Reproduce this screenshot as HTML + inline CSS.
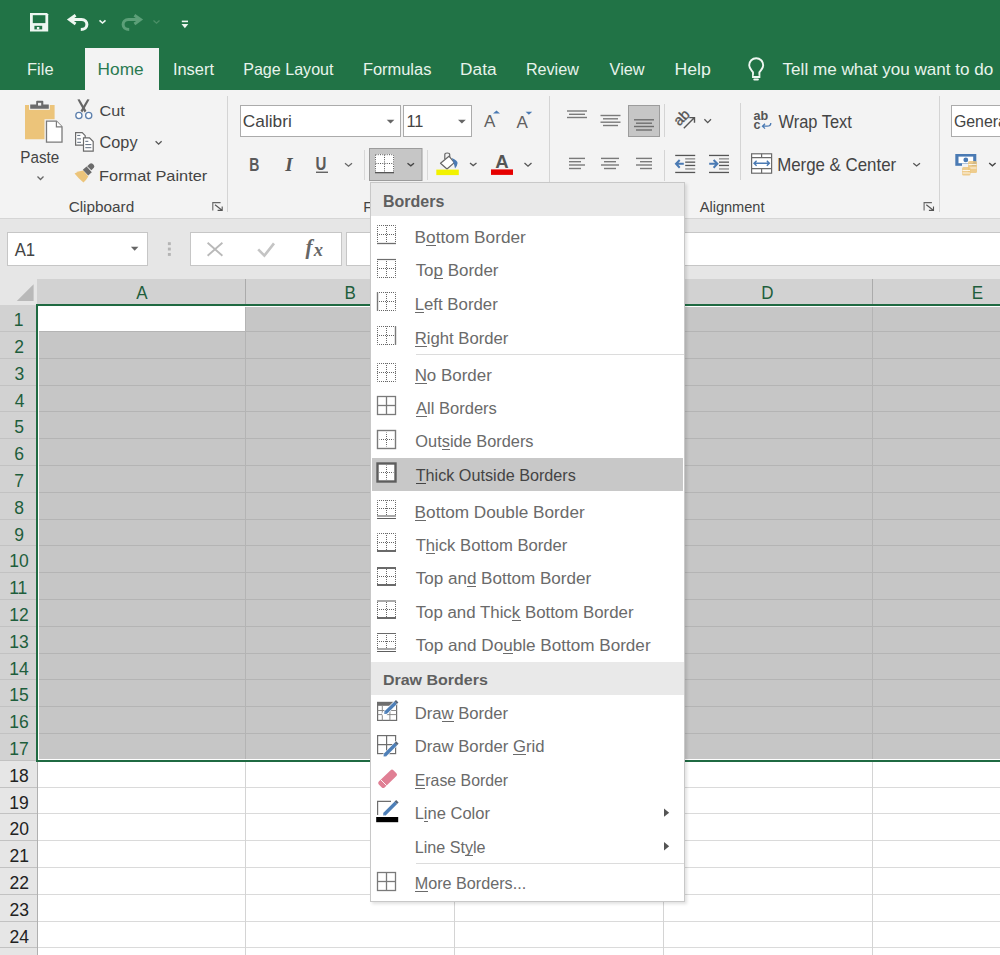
<!DOCTYPE html>
<html><head><meta charset="utf-8"><style>
*{margin:0;padding:0;box-sizing:border-box}
html,body{width:1000px;height:955px;overflow:hidden;background:#fff;font-family:"Liberation Sans",sans-serif}
.a{position:absolute}
svg.a{overflow:visible}
.t{position:absolute;white-space:nowrap}
</style></head><body>
<div class="a" style="left:0px;top:279px;width:37px;height:26px;background:#e6e6e6"></div>
<svg class="a" style="left:0;top:0" width="40" height="310"><path d="M16.8 301H33.6V284.2Z" fill="#b9b9b9"/></svg>
<div class="a" style="left:37px;top:279px;width:963px;height:26px;background:#d2d2d2"></div>
<div class="a" style="left:245px;top:279px;width:1px;height:26px;background:#ababab"></div>
<div class="a" style="left:454px;top:279px;width:1px;height:26px;background:#ababab"></div>
<div class="a" style="left:663px;top:279px;width:1px;height:26px;background:#ababab"></div>
<div class="a" style="left:872px;top:279px;width:1px;height:26px;background:#ababab"></div>
<div class="t" style="left:136.20px;top:284.00px;font-size:17.00px;line-height:19px;color:#1e5e3c;transform:scaleY(1.108);transform-origin:0 15px">A</div>
<div class="t" style="left:344.49px;top:284.00px;font-size:17.00px;line-height:19px;color:#1e5e3c;transform:scaleY(1.108);transform-origin:0 15px">B</div>
<div class="t" style="left:552.65px;top:284.00px;font-size:17.00px;line-height:19px;color:#1e5e3c;transform:scaleY(1.092);transform-origin:0 15px">C</div>
<div class="t" style="left:761.14px;top:284.00px;font-size:17.00px;line-height:19px;color:#1e5e3c;transform:scaleY(1.108);transform-origin:0 15px">D</div>
<div class="t" style="left:971.64px;top:284.00px;font-size:17.00px;line-height:19px;color:#1e5e3c;transform:scaleY(1.108);transform-origin:0 15px">E</div>
<div class="a" style="left:0px;top:305px;width:37px;height:26px;background:#d2d2d2"></div>
<div class="a" style="left:0px;top:331px;width:37px;height:1px;background:#c2c2c2"></div>
<div class="a" style="left:37px;top:305px;width:963px;height:26px;background:#c6c6c6"></div>
<div class="a" style="left:37px;top:331px;width:963px;height:1px;background:#b4b4b4"></div>
<div class="t" style="left:13.78px;top:310.00px;font-size:17.50px;line-height:20px;color:#1e5e3c">1</div>
<div class="a" style="left:0px;top:332px;width:37px;height:26px;background:#d2d2d2"></div>
<div class="a" style="left:0px;top:358px;width:37px;height:1px;background:#c2c2c2"></div>
<div class="a" style="left:37px;top:332px;width:963px;height:26px;background:#c6c6c6"></div>
<div class="a" style="left:37px;top:358px;width:963px;height:1px;background:#b4b4b4"></div>
<div class="t" style="left:14.13px;top:337.00px;font-size:17.50px;line-height:20px;color:#1e5e3c">2</div>
<div class="a" style="left:0px;top:359px;width:37px;height:26px;background:#d2d2d2"></div>
<div class="a" style="left:0px;top:385px;width:37px;height:1px;background:#c2c2c2"></div>
<div class="a" style="left:37px;top:359px;width:963px;height:26px;background:#c6c6c6"></div>
<div class="a" style="left:37px;top:385px;width:963px;height:1px;background:#b4b4b4"></div>
<div class="t" style="left:14.48px;top:364.00px;font-size:17.50px;line-height:20px;color:#1e5e3c">3</div>
<div class="a" style="left:0px;top:386px;width:37px;height:25px;background:#d2d2d2"></div>
<div class="a" style="left:0px;top:411px;width:37px;height:1px;background:#c2c2c2"></div>
<div class="a" style="left:37px;top:386px;width:963px;height:25px;background:#c6c6c6"></div>
<div class="a" style="left:37px;top:411px;width:963px;height:1px;background:#b4b4b4"></div>
<div class="t" style="left:14.65px;top:390.50px;font-size:17.50px;line-height:20px;color:#1e5e3c">4</div>
<div class="a" style="left:0px;top:412px;width:37px;height:26px;background:#d2d2d2"></div>
<div class="a" style="left:0px;top:438px;width:37px;height:1px;background:#c2c2c2"></div>
<div class="a" style="left:37px;top:412px;width:963px;height:26px;background:#c6c6c6"></div>
<div class="a" style="left:37px;top:438px;width:963px;height:1px;background:#b4b4b4"></div>
<div class="t" style="left:14.30px;top:417.00px;font-size:17.50px;line-height:20px;color:#1e5e3c">5</div>
<div class="a" style="left:0px;top:439px;width:37px;height:26px;background:#d2d2d2"></div>
<div class="a" style="left:0px;top:465px;width:37px;height:1px;background:#c2c2c2"></div>
<div class="a" style="left:37px;top:439px;width:963px;height:26px;background:#c6c6c6"></div>
<div class="a" style="left:37px;top:465px;width:963px;height:1px;background:#b4b4b4"></div>
<div class="t" style="left:14.13px;top:444.00px;font-size:17.50px;line-height:20px;color:#1e5e3c">6</div>
<div class="a" style="left:0px;top:466px;width:37px;height:26px;background:#d2d2d2"></div>
<div class="a" style="left:0px;top:492px;width:37px;height:1px;background:#c2c2c2"></div>
<div class="a" style="left:37px;top:466px;width:963px;height:26px;background:#c6c6c6"></div>
<div class="a" style="left:37px;top:492px;width:963px;height:1px;background:#b4b4b4"></div>
<div class="t" style="left:14.13px;top:471.00px;font-size:17.50px;line-height:20px;color:#1e5e3c">7</div>
<div class="a" style="left:0px;top:493px;width:37px;height:26px;background:#d2d2d2"></div>
<div class="a" style="left:0px;top:519px;width:37px;height:1px;background:#c2c2c2"></div>
<div class="a" style="left:37px;top:493px;width:963px;height:26px;background:#c6c6c6"></div>
<div class="a" style="left:37px;top:519px;width:963px;height:1px;background:#b4b4b4"></div>
<div class="t" style="left:14.30px;top:498.00px;font-size:17.50px;line-height:20px;color:#1e5e3c">8</div>
<div class="a" style="left:0px;top:520px;width:37px;height:25px;background:#d2d2d2"></div>
<div class="a" style="left:0px;top:545px;width:37px;height:1px;background:#c2c2c2"></div>
<div class="a" style="left:37px;top:520px;width:963px;height:25px;background:#c6c6c6"></div>
<div class="a" style="left:37px;top:545px;width:963px;height:1px;background:#b4b4b4"></div>
<div class="t" style="left:14.30px;top:524.50px;font-size:17.50px;line-height:20px;color:#1e5e3c">9</div>
<div class="a" style="left:0px;top:546px;width:37px;height:26px;background:#d2d2d2"></div>
<div class="a" style="left:0px;top:572px;width:37px;height:1px;background:#c2c2c2"></div>
<div class="a" style="left:37px;top:546px;width:963px;height:26px;background:#c6c6c6"></div>
<div class="a" style="left:37px;top:572px;width:963px;height:1px;background:#b4b4b4"></div>
<div class="t" style="left:9.18px;top:551.00px;font-size:17.50px;line-height:20px;color:#1e5e3c">10</div>
<div class="a" style="left:0px;top:573px;width:37px;height:26px;background:#d2d2d2"></div>
<div class="a" style="left:0px;top:599px;width:37px;height:1px;background:#c2c2c2"></div>
<div class="a" style="left:37px;top:573px;width:963px;height:26px;background:#c6c6c6"></div>
<div class="a" style="left:37px;top:599px;width:963px;height:1px;background:#b4b4b4"></div>
<div class="t" style="left:9.18px;top:578.00px;font-size:17.50px;line-height:20px;color:#1e5e3c">11</div>
<div class="a" style="left:0px;top:600px;width:37px;height:26px;background:#d2d2d2"></div>
<div class="a" style="left:0px;top:626px;width:37px;height:1px;background:#c2c2c2"></div>
<div class="a" style="left:37px;top:600px;width:963px;height:26px;background:#c6c6c6"></div>
<div class="a" style="left:37px;top:626px;width:963px;height:1px;background:#b4b4b4"></div>
<div class="t" style="left:9.18px;top:605.00px;font-size:17.50px;line-height:20px;color:#1e5e3c">12</div>
<div class="a" style="left:0px;top:627px;width:37px;height:26px;background:#d2d2d2"></div>
<div class="a" style="left:0px;top:653px;width:37px;height:1px;background:#c2c2c2"></div>
<div class="a" style="left:37px;top:627px;width:963px;height:26px;background:#c6c6c6"></div>
<div class="a" style="left:37px;top:653px;width:963px;height:1px;background:#b4b4b4"></div>
<div class="t" style="left:9.18px;top:632.00px;font-size:17.50px;line-height:20px;color:#1e5e3c">13</div>
<div class="a" style="left:0px;top:654px;width:37px;height:25px;background:#d2d2d2"></div>
<div class="a" style="left:0px;top:679px;width:37px;height:1px;background:#c2c2c2"></div>
<div class="a" style="left:37px;top:654px;width:963px;height:25px;background:#c6c6c6"></div>
<div class="a" style="left:37px;top:679px;width:963px;height:1px;background:#b4b4b4"></div>
<div class="t" style="left:9.18px;top:658.50px;font-size:17.50px;line-height:20px;color:#1e5e3c">14</div>
<div class="a" style="left:0px;top:680px;width:37px;height:26px;background:#d2d2d2"></div>
<div class="a" style="left:0px;top:706px;width:37px;height:1px;background:#c2c2c2"></div>
<div class="a" style="left:37px;top:680px;width:963px;height:26px;background:#c6c6c6"></div>
<div class="a" style="left:37px;top:706px;width:963px;height:1px;background:#b4b4b4"></div>
<div class="t" style="left:9.18px;top:685.00px;font-size:17.50px;line-height:20px;color:#1e5e3c">15</div>
<div class="a" style="left:0px;top:707px;width:37px;height:26px;background:#d2d2d2"></div>
<div class="a" style="left:0px;top:733px;width:37px;height:1px;background:#c2c2c2"></div>
<div class="a" style="left:37px;top:707px;width:963px;height:26px;background:#c6c6c6"></div>
<div class="a" style="left:37px;top:733px;width:963px;height:1px;background:#b4b4b4"></div>
<div class="t" style="left:9.18px;top:712.00px;font-size:17.50px;line-height:20px;color:#1e5e3c">16</div>
<div class="a" style="left:0px;top:734px;width:37px;height:26px;background:#d2d2d2"></div>
<div class="a" style="left:0px;top:760px;width:37px;height:1px;background:#c2c2c2"></div>
<div class="a" style="left:37px;top:734px;width:963px;height:26px;background:#c6c6c6"></div>
<div class="a" style="left:37px;top:760px;width:963px;height:1px;background:#b4b4b4"></div>
<div class="t" style="left:9.18px;top:739.00px;font-size:17.50px;line-height:20px;color:#1e5e3c">17</div>
<div class="a" style="left:0px;top:761px;width:37px;height:26px;background:#e6e6e6"></div>
<div class="a" style="left:0px;top:787px;width:37px;height:1px;background:#c2c2c2"></div>
<div class="a" style="left:37px;top:787px;width:963px;height:1px;background:#dadada"></div>
<div class="t" style="left:9.18px;top:766.00px;font-size:17.50px;line-height:20px;color:#222">18</div>
<div class="a" style="left:0px;top:788px;width:37px;height:25px;background:#e6e6e6"></div>
<div class="a" style="left:0px;top:813px;width:37px;height:1px;background:#c2c2c2"></div>
<div class="a" style="left:37px;top:813px;width:963px;height:1px;background:#dadada"></div>
<div class="t" style="left:9.18px;top:792.50px;font-size:17.50px;line-height:20px;color:#222">19</div>
<div class="a" style="left:0px;top:814px;width:37px;height:26px;background:#e6e6e6"></div>
<div class="a" style="left:0px;top:840px;width:37px;height:1px;background:#c2c2c2"></div>
<div class="a" style="left:37px;top:840px;width:963px;height:1px;background:#dadada"></div>
<div class="t" style="left:9.53px;top:819.00px;font-size:17.50px;line-height:20px;color:#222">20</div>
<div class="a" style="left:0px;top:841px;width:37px;height:26px;background:#e6e6e6"></div>
<div class="a" style="left:0px;top:867px;width:37px;height:1px;background:#c2c2c2"></div>
<div class="a" style="left:37px;top:867px;width:963px;height:1px;background:#dadada"></div>
<div class="t" style="left:9.53px;top:846.00px;font-size:17.50px;line-height:20px;color:#222">21</div>
<div class="a" style="left:0px;top:868px;width:37px;height:26px;background:#e6e6e6"></div>
<div class="a" style="left:0px;top:894px;width:37px;height:1px;background:#c2c2c2"></div>
<div class="a" style="left:37px;top:894px;width:963px;height:1px;background:#dadada"></div>
<div class="t" style="left:9.53px;top:873.00px;font-size:17.50px;line-height:20px;color:#222">22</div>
<div class="a" style="left:0px;top:895px;width:37px;height:26px;background:#e6e6e6"></div>
<div class="a" style="left:0px;top:921px;width:37px;height:1px;background:#c2c2c2"></div>
<div class="a" style="left:37px;top:921px;width:963px;height:1px;background:#dadada"></div>
<div class="t" style="left:9.53px;top:900.00px;font-size:17.50px;line-height:20px;color:#222">23</div>
<div class="a" style="left:0px;top:922px;width:37px;height:25px;background:#e6e6e6"></div>
<div class="a" style="left:0px;top:947px;width:37px;height:1px;background:#c2c2c2"></div>
<div class="a" style="left:37px;top:947px;width:963px;height:1px;background:#dadada"></div>
<div class="t" style="left:9.53px;top:926.50px;font-size:17.50px;line-height:20px;color:#222">24</div>
<div class="a" style="left:0px;top:948px;width:37px;height:26px;background:#e6e6e6"></div>
<div class="a" style="left:0px;top:974px;width:37px;height:1px;background:#c2c2c2"></div>
<div class="a" style="left:37px;top:974px;width:963px;height:1px;background:#dadada"></div>
<div class="t" style="left:9.53px;top:953.00px;font-size:17.50px;line-height:20px;color:#222">25</div>
<div class="a" style="left:245px;top:305px;width:1px;height:455px;background:#b4b4b4"></div>
<div class="a" style="left:245px;top:760px;width:1px;height:195px;background:#d4d4d4"></div>
<div class="a" style="left:454px;top:305px;width:1px;height:455px;background:#b4b4b4"></div>
<div class="a" style="left:454px;top:760px;width:1px;height:195px;background:#d4d4d4"></div>
<div class="a" style="left:663px;top:305px;width:1px;height:455px;background:#b4b4b4"></div>
<div class="a" style="left:663px;top:760px;width:1px;height:195px;background:#d4d4d4"></div>
<div class="a" style="left:872px;top:305px;width:1px;height:455px;background:#b4b4b4"></div>
<div class="a" style="left:872px;top:760px;width:1px;height:195px;background:#d4d4d4"></div>
<div class="a" style="left:38px;top:306px;width:207px;height:25px;background:#fff"></div>
<div class="a" style="left:37px;top:305px;width:1px;height:650px;background:#b0b0b0"></div>
<div class="a" style="left:38px;top:306px;width:962px;height:1px;background:#fff"></div>
<div class="a" style="left:38px;top:306px;width:1px;height:454px;background:#fff"></div>
<div class="a" style="left:38px;top:759px;width:962px;height:1px;background:#fff"></div>
<div class="a" style="left:36px;top:304px;width:964px;height:2px;background:#1f6a42"></div>
<div class="a" style="left:36px;top:760px;width:964px;height:2px;background:#1f6a42"></div>
<div class="a" style="left:36px;top:304px;width:2px;height:458px;background:#1f6a42"></div>
<div class="a" style="left:0px;top:0px;width:1000px;height:90px;background:#217346"></div>
<div class="a" style="left:0px;top:90px;width:85px;height:1px;background:#e2f3e8"></div>
<div class="a" style="left:159px;top:90px;width:841px;height:1px;background:#e2f3e8"></div>
<div class="a" style="left:85px;top:48px;width:74px;height:43px;background:#f3f3f3"></div>
<div class="t" style="left:27.08px;top:60.10px;font-size:16.45px;line-height:18px;color:#e8f3ec">File</div>
<div class="t" style="left:172.92px;top:60.10px;font-size:16.41px;line-height:18px;color:#e8f3ec;transform:scaleY(1.042);transform-origin:0 15px">Insert</div>
<div class="t" style="left:243.21px;top:60.10px;font-size:16.09px;line-height:18px;color:#e8f3ec;transform:scaleY(1.063);transform-origin:0 15px">Page Layout</div>
<div class="t" style="left:362.88px;top:60.10px;font-size:16.46px;line-height:18px;color:#e8f3ec">Formulas</div>
<div class="t" style="left:460.12px;top:59.10px;font-size:17.24px;line-height:20px;color:#e8f3ec">Data</div>
<div class="t" style="left:525.91px;top:60.10px;font-size:16.15px;line-height:18px;color:#e8f3ec">Review</div>
<div class="t" style="left:609.60px;top:60.10px;font-size:16.27px;line-height:18px;color:#e8f3ec">View</div>
<div class="t" style="left:674.39px;top:59.10px;font-size:17.68px;line-height:20px;color:#e8f3ec;transform:scaleY(0.914);transform-origin:0 16px">Help</div>
<div class="t" style="left:782.56px;top:60.10px;font-size:17.08px;line-height:19px;color:#e8f3ec;transform:scaleY(0.946);transform-origin:0 15px">Tell me what you want to do</div>
<div class="t" style="left:97.62px;top:59.10px;font-size:17.25px;line-height:20px;color:#2a7a50">Home</div>
<svg class="a" style="left:0;top:0" width="1000" height="955"><path d="M30 13H47L48.2 14.2V31.4H30Z" fill="#eef7f1"/><rect x="32.8" y="15.2" width="12.6" height="7.9" fill="#217346"/><rect x="34.4" y="25.8" width="7.8" height="3.6" fill="#217346"/><rect x="36.9" y="27" width="2.4" height="2.4" fill="#eef7f1"/><path d="M75.6 15.2L69.4 19.6L75.6 24" fill="none" stroke="#eef7f1" stroke-width="2.9" stroke-linejoin="miter"/><path d="M69.5 19.6H81.5C85 19.6 86.9 22 86.9 24.6C86.9 27.4 84.6 29.6 80.8 29.6" fill="none" stroke="#eef7f1" stroke-width="3"/><path d="M99.5 20.3L102.5 23L105.5 20.3" fill="none" stroke="#eef7f1" stroke-width="1.6"/><path d="M134.4 15.2L140.6 19.6L134.4 24" fill="none" stroke="#5c9f78" stroke-width="2.9"/><path d="M140.5 19.6H128.5C125 19.6 123.1 22 123.1 24.6C123.1 27.4 125.4 29.6 129.2 29.6" fill="none" stroke="#5c9f78" stroke-width="3"/><path d="M153.5 20.5L156.5 23.2L159.5 20.5" fill="none" stroke="#4b8f67" stroke-width="1.3"/><rect x="181.8" y="20.6" width="6.2" height="1.6" fill="#eef7f1"/><path d="M181.5 24H188.3L184.9 28.2Z" fill="#eef7f1"/><path d="M753 72.2C751.5 70 749.2 68.5 749.2 65.2A7 7 0 0 1 763.2 65.2C763.2 68.5 760.9 70 759.4 72.2V77H753Z" fill="none" stroke="#eef7f1" stroke-width="1.9"/><rect x="753" y="74.8" width="6.4" height="1.1" fill="#217346" opacity="0.35"/><rect x="753.3" y="78.6" width="5.6" height="2" rx="1" fill="#eef7f1"/></svg>
<div class="a" style="left:0px;top:90px;width:1000px;height:129px;background:#f3f3f3;border-bottom:1px solid #d5d5d5"></div>
<div class="t" style="left:20.28px;top:148.80px;font-size:15.24px;line-height:17px;color:#444444;transform:scaleY(1.122);transform-origin:0 14px">Paste</div>
<div class="t" style="left:99.59px;top:100.60px;font-size:16.18px;line-height:18px;color:#444444;transform:scaleY(0.954);transform-origin:0 15px">Cut</div>
<div class="t" style="left:99.59px;top:132.80px;font-size:16.28px;line-height:18px;color:#444444">Copy</div>
<div class="t" style="left:99.09px;top:165.50px;font-size:16.38px;line-height:18px;color:#444444;transform:scaleY(0.928);transform-origin:0 15px">Format Painter</div>
<div class="t" style="left:68.63px;top:198.00px;font-size:15.33px;line-height:17px;color:#444444">Clipboard</div>
<div class="t" style="left:363.13px;top:198.60px;font-size:14.60px;line-height:16px;color:#444444">Font</div>
<div class="a" style="left:227px;top:96px;width:1px;height:116px;background:#d4d4d4"></div>
<div class="a" style="left:240px;top:105px;width:161px;height:32px;background:#fff;border:1px solid #ababab"></div>
<div class="t" style="left:242.84px;top:111.10px;font-size:17.27px;line-height:20px;color:#444444;transform:scaleY(0.912);transform-origin:0 16px">Calibri</div>
<div class="a" style="left:403px;top:105px;width:69px;height:32px;background:#fff;border:1px solid #ababab"></div>
<div class="t" style="left:406.45px;top:112.10px;font-size:16.38px;line-height:18px;color:#444444">11</div>
<div class="a" style="left:549px;top:96px;width:1px;height:116px;background:#d4d4d4"></div>
<div class="a" style="left:664px;top:104px;width:1px;height:33px;background:#d4d4d4"></div>
<div class="a" style="left:664px;top:150px;width:1px;height:31px;background:#d4d4d4"></div>
<div class="a" style="left:740px;top:103px;width:1px;height:77px;background:#d4d4d4"></div>
<div class="t" style="left:778.50px;top:112.50px;font-size:16.45px;line-height:18px;color:#444444;transform:scaleY(1.075);transform-origin:0 15px">Wrap Text</div>
<div class="t" style="left:777.15px;top:156.00px;font-size:16.87px;line-height:19px;color:#444444;transform:scaleY(1.042);transform-origin:0 15px">Merge &amp; Center</div>
<div class="t" style="left:699.70px;top:198.60px;font-size:14.59px;line-height:16px;color:#444444;transform:scaleY(0.939);transform-origin:0 13px">Alignment</div>
<div class="a" style="left:939px;top:96px;width:1px;height:116px;background:#d4d4d4"></div>
<div class="a" style="left:951px;top:105px;width:60px;height:32px;background:#fff;border:1px solid #ababab"></div>
<div class="t" style="left:953.91px;top:112.80px;font-size:15.90px;line-height:17px;color:#444444">General</div>
<svg class="a" style="left:0;top:0" width="1000" height="955"><path d="M25 105H54.6V120H45V139.2H25Z" fill="#ecc47a"/><rect x="29" y="103.4" width="20.8" height="6.4" fill="#f3f3f3"/><path d="M30.2 104.4H36.2V101.6Q36.2 100.7 37.1 100.7H42.4Q43.3 100.7 43.3 101.6V104.4H48.8V108.8H30.2Z" fill="#6b6b6b"/><rect x="38" y="102.8" width="3.2" height="2.8" fill="#f3f3f3"/><path d="M44.5 119.2H57L63.8 126V144H44.5Z" fill="#f3f3f3"/><path d="M46.5 121.2H56.4L62 126.8V142.2H46.5Z" fill="#fff" stroke="#7a7a7a" stroke-width="1.3"/><path d="M56.4 121.2V126.8H62" fill="#fff" stroke="#7a7a7a" stroke-width="1.2"/><path d="M37.5 176.5L40.5 179.5L43.5 176.5" fill="none" stroke="#666" stroke-width="1.3"/><path d="M155.6 141.3L158.6 144.2L161.6 141.3" fill="none" stroke="#555" stroke-width="1.3"/><path d="M77.4 99.6L79.6 99.2L86.4 110.8L84.6 112.4Z" fill="#666"/><path d="M89.5 99.6L87.3 99.2L80.5 110.8L82.3 112.4Z" fill="#666"/><circle cx="78.9" cy="115.5" r="3.1" fill="#fff" stroke="#5d80ad" stroke-width="1.3"/><circle cx="88.7" cy="115.5" r="3.1" fill="#fff" stroke="#5d80ad" stroke-width="1.3"/><path d="M75.6 132.7H82.2L85.2 135.7V145.1H75.6Z" fill="#fff" stroke="#6b6b6b" stroke-width="1.2"/><rect x="77.2" y="134.9" width="3.1" height="1.1" fill="#6d7a8a"/><rect x="77.2" y="138.3" width="3.8" height="1.1" fill="#6d7a8a"/><rect x="77.2" y="141.8" width="3.8" height="1.1" fill="#6d7a8a"/><path d="M83.5 137.9H89.5L93.2 141.6V151.1H83.5Z" fill="#fff" stroke="#6b6b6b" stroke-width="1.2"/><rect x="85.3" y="140.8" width="3.0" height="1.1" fill="#6d7a8a"/><rect x="85.3" y="144.0" width="6.0" height="1.1" fill="#6d7a8a"/><rect x="85.3" y="147.1" width="6.0" height="1.1" fill="#6d7a8a"/><path d="M74.6 173.4Q78 171.2 83.2 170.6L88.3 176.6Q86.5 180 83.4 182.4Q78.5 178.5 74.6 173.4Z" fill="#ecc47a"/><path d="M82.8 169.8L86.6 166.4L91.8 172.2L88.2 175.4Z" fill="#6b6b6b"/><path d="M87.2 166.2L89.8 163.8Q91.2 162.6 92.6 163.8L93.8 165Q95 166.4 93.8 167.8L91.4 170.2Z" fill="#6b6b6b"/><path d="M386.7 119.8H394.4L390.55 123.6Z" fill="#666"/><path d="M458 119.8H465.8L461.9 123.6Z" fill="#666"/><text x="484" y="127" font-family="Liberation Sans" font-size="17" fill="#606060">A</text><path d="M493 113.6L496.5 110.4L500 113.6Z" fill="#4a7ab3"/><text x="516.6" y="128.2" font-family="Liberation Sans" font-size="17" fill="#606060">A</text><path d="M525.6 111.7H532.2L528.9 114.8Z" fill="#4a7ab3"/><text x="0" y="0" transform="translate(249.2 170.6) scale(0.8 1)" font-family="Liberation Sans" font-weight="bold" font-size="17.5" fill="#5a5a5a">B</text><text x="285.3" y="170.6" font-family="Liberation Serif" font-style="italic" font-weight="bold" font-size="19" fill="#555">I</text><text x="0" y="0" transform="translate(315.6 170.4) scale(0.86 1)" font-family="Liberation Sans" font-weight="bold" font-size="17.5" fill="#5a5a5a">U</text><rect x="316" y="171.6" width="12" height="1.3" fill="#555"/><path d="M345.0 163.3L348.5 166.2L352.0 163.3" fill="none" stroke="#666" stroke-width="1.3"/><rect x="364" y="150" width="1" height="30" fill="#d8d8d8"/><rect x="369.5" y="148.5" width="52.5" height="32" fill="#c6c6c6" stroke="#9c9c9c" stroke-width="1"/><rect x="375" y="154.2" width="19" height="18.5" fill="#fff"/><path d="M375.5 154.7H393.5M375.5 163.5H393.5M375.5 154.7V172M393.5 154.7V172M384.5 154.7V172" fill="none" stroke="#555" stroke-width="1" stroke-dasharray="1 1.25"/><rect x="375" y="172" width="19" height="1.3" fill="#555"/><path d="M407.5 163.2L410.8 165.8L414.0 163.2" fill="none" stroke="#444" stroke-width="1.4"/><rect x="427" y="150" width="1" height="30" fill="#d8d8d8"/><path d="M444.8 159V154.6Q444.8 153 447.2 153Q449.7 153 449.7 154.6V160" fill="none" stroke="#666" stroke-width="1.2"/><path d="M440.5 163.3L449 156.2L454.3 162.6L447 169Z" fill="#fff" stroke="#666" stroke-width="1.2" stroke-linejoin="round"/><path d="M451.8 158Q457.5 160.5 457.6 163Q457.3 166 455 168.6Q454.5 165 453.5 162.7Z" fill="#4a7ab3"/><rect x="436.3" y="169.6" width="22.5" height="5.5" fill="#f2f200"/><path d="M470.0 163.0L473.2 165.6L476.5 163.0" fill="none" stroke="#555" stroke-width="1.3"/><text x="495.3" y="167.8" font-family="Liberation Sans" font-weight="bold" font-size="18.6" fill="#555">A</text><rect x="491" y="169.4" width="22" height="5.5" fill="#e60000"/><path d="M524.5 163.0L528.0 166.2L531.5 163.0" fill="none" stroke="#555" stroke-width="1.3"/><rect x="567.0" y="110.3" width="20.0" height="1.4" fill="#7a7a7a"/><rect x="569.0" y="113.6" width="16.0" height="1.4" fill="#7a7a7a"/><rect x="567.0" y="116.8" width="20.0" height="1.4" fill="#7a7a7a"/><rect x="600.5" y="114.8" width="20.0" height="1.4" fill="#7a7a7a"/><rect x="603.0" y="118.1" width="15.0" height="1.4" fill="#7a7a7a"/><rect x="600.5" y="121.5" width="20.0" height="1.4" fill="#7a7a7a"/><rect x="603.0" y="124.8" width="15.0" height="1.4" fill="#7a7a7a"/><rect x="628.5" y="105.5" width="31" height="31" fill="#c6c6c6" stroke="#9c9c9c" stroke-width="1"/><rect x="634.0" y="119.1" width="20.0" height="1.4" fill="#6e6e6e"/><rect x="636.0" y="122.5" width="16.0" height="1.4" fill="#6e6e6e"/><rect x="634.0" y="125.8" width="20.0" height="1.4" fill="#6e6e6e"/><rect x="636.0" y="129.3" width="16.0" height="1.4" fill="#6e6e6e"/><rect x="569.0" y="157.7" width="16.0" height="1.4" fill="#7a7a7a"/><rect x="569.0" y="161.0" width="12.0" height="1.4" fill="#7a7a7a"/><rect x="569.0" y="164.3" width="16.0" height="1.4" fill="#7a7a7a"/><rect x="569.0" y="167.8" width="12.0" height="1.4" fill="#7a7a7a"/><rect x="601.0" y="157.7" width="18.0" height="1.4" fill="#7a7a7a"/><rect x="604.0" y="161.0" width="12.0" height="1.4" fill="#7a7a7a"/><rect x="601.0" y="164.3" width="18.0" height="1.4" fill="#7a7a7a"/><rect x="604.0" y="167.8" width="12.0" height="1.4" fill="#7a7a7a"/><rect x="636.0" y="157.7" width="16.0" height="1.4" fill="#7a7a7a"/><rect x="640.0" y="161.0" width="12.0" height="1.4" fill="#7a7a7a"/><rect x="636.0" y="164.3" width="16.0" height="1.4" fill="#7a7a7a"/><rect x="640.0" y="167.8" width="12.0" height="1.4" fill="#7a7a7a"/><text x="0" y="0" font-family="Liberation Sans" font-size="14.5" fill="#555" stroke="#555" stroke-width="0.35" transform="translate(679.2 126.6) rotate(-45)">ab</text><path d="M683.8 128.2L694.5 117.6M689.3 117.6H694.5V122.8" fill="none" stroke="#555" stroke-width="1.4"/><path d="M704.4 119.3L707.7 122.6L711.0 119.3" fill="none" stroke="#555" stroke-width="1.3"/><rect x="675.2" y="154.8" width="20.0" height="1.3" fill="#555"/><rect x="675.2" y="171.8" width="20.0" height="1.3" fill="#555"/><rect x="685.2" y="158.2" width="10.0" height="1.3" fill="#8a8a8a"/><rect x="685.2" y="168.3" width="10.0" height="1.3" fill="#8a8a8a"/><rect x="685.2" y="161.5" width="10.0" height="1.3" fill="#555"/><rect x="685.2" y="164.8" width="10.0" height="1.3" fill="#555"/><path d="M679.7 160L676.0 163.8L679.7 167.8M676.2 163.8H683.8" fill="none" stroke="#4a7ab3" stroke-width="2"/><rect x="709.0" y="154.8" width="20.0" height="1.3" fill="#555"/><rect x="709.0" y="171.8" width="20.0" height="1.3" fill="#555"/><rect x="719.0" y="158.2" width="10.0" height="1.3" fill="#8a8a8a"/><rect x="719.0" y="168.3" width="10.0" height="1.3" fill="#8a8a8a"/><rect x="719.0" y="161.5" width="10.0" height="1.3" fill="#555"/><rect x="719.0" y="164.8" width="10.0" height="1.3" fill="#555"/><path d="M713.6 160L717.4 163.8L713.6 167.8M709.2 163.8H717.2" fill="none" stroke="#4a7ab3" stroke-width="2"/><text x="753.6" y="120" font-family="Liberation Sans" font-weight="bold" font-size="12.6" fill="#555">ab</text><text x="753.6" y="129.4" font-family="Liberation Sans" font-weight="bold" font-size="12.6" fill="#555">c</text><path d="M770.8 123Q770.8 126.2 767 126.2H762.5M765 123.8L762.5 126.2L765 128.6" fill="none" stroke="#4a7ab3" stroke-width="1.3"/><rect x="751.6" y="153.8" width="20" height="19.4" fill="#fff" stroke="#6b6b6b" stroke-width="1.2"/><path d="M751.6 157.6H771.6M751.6 168.6H771.6M761.6 153.8V157.6M761.6 168.6V173.2" fill="none" stroke="#6b6b6b" stroke-width="1.2"/><path d="M754 163.3H769.4M756.6 160.8L754 163.3L756.6 165.8M766.8 160.8L769.4 163.3L766.8 165.8" fill="none" stroke="#4a7ab3" stroke-width="1.4"/><path d="M913.3 163.2L916.6 166.0L920.0 163.2" fill="none" stroke="#555" stroke-width="1.3"/><path d="M212.8 210.4V202.6H220.6" fill="none" stroke="#666" stroke-width="1.1"/><path d="M215.0 204.8L222.0 210.2M217.6 210.4H222.2V206.6" fill="none" stroke="#555" stroke-width="1.1"/><path d="M924.1 210.4V202.6H931.9" fill="none" stroke="#666" stroke-width="1.1"/><path d="M926.3 204.8L933.3 210.2M928.9 210.4H933.5V206.6" fill="none" stroke="#555" stroke-width="1.1"/><rect x="955.3" y="154" width="21" height="11.8" fill="#4a7ab3"/><path d="M958.5 156.6H973.2V163.2H958.5Z" fill="#fff"/><circle cx="965.8" cy="159.9" r="2.4" fill="#4a7ab3"/><path d="M962 163.5h9.8v11.5h-9.8z" fill="#f3f3f3"/><rect x="968" y="161" width="9" height="12" rx="1.5" fill="#ecc47a" opacity="0.85"/><path d="M968.5 164.5H976.5M968.5 168H976.5" stroke="#fff" stroke-width="0.8"/><rect x="962" y="167" width="8.5" height="8.5" rx="1.5" fill="#ecc47a" opacity="0.85"/><path d="M962.5 170.5H970M962.5 173H970" stroke="#fff" stroke-width="0.8"/><path d="M989.2 163.0L992.4 165.8L995.6 163.0" fill="none" stroke="#444" stroke-width="1.4"/></svg>
<div class="a" style="left:0px;top:219px;width:1000px;height:60px;background:#e6e6e6"></div>
<div class="a" style="left:7px;top:232px;width:141px;height:34px;background:#fff;border:1px solid #c6c6c6"></div>
<div class="t" style="left:14.70px;top:240.50px;font-size:16.74px;line-height:19px;color:#444;transform:scaleY(1.065);transform-origin:0 15px">A1</div>
<div class="a" style="left:190px;top:232px;width:152px;height:34px;background:#fff;border:1px solid #c6c6c6"></div>
<div class="a" style="left:346px;top:232px;width:700px;height:34px;background:#fff;border:1px solid #c6c6c6"></div>
<svg class="a" style="left:0;top:0" width="1000" height="955"><path d="M130.9 246.8H138.4L134.65 250.7Z" fill="#666"/><rect x="167.9" y="242.2" width="2.9" height="2.9" fill="#b4b4b4"/><rect x="167.9" y="247.6" width="2.9" height="2.9" fill="#b4b4b4"/><rect x="167.9" y="253" width="2.9" height="2.9" fill="#b4b4b4"/><path d="M207.6 242.8L222.4 255.8M222.4 242.8L207.6 255.8" stroke="#b9b9b9" stroke-width="1.8"/><path d="M258.2 249.3L264.4 255.6L274 243.4" fill="none" stroke="#c4c4c4" stroke-width="2.6"/><text x="305.6" y="253.6" font-family="Liberation Serif" font-style="italic" font-weight="bold" font-size="21" fill="#666">f</text><text x="313.8" y="255.5" font-family="Liberation Serif" font-style="italic" font-weight="bold" font-size="18.5" fill="#666">x</text></svg>
<div class="a" style="left:370px;top:182px;width:315px;height:720px;background:#fff;border:1px solid #c8c8c8;box-shadow:2px 2px 3px rgba(0,0,0,0.12)"></div>
<div class="a" style="left:371px;top:183px;width:313px;height:33px;background:#e9e9e9"></div>
<div class="a" style="left:371px;top:662px;width:313px;height:33px;background:#e9e9e9"></div>
<div class="a" style="left:372px;top:458px;width:311px;height:33px;background:#c8c8c8"></div>
<div class="t" style="left:382.94px;top:192.50px;font-size:16.00px;line-height:17px;color:#5f5f5f;font-weight:bold">Borders</div>
<div class="t" style="left:382.94px;top:671.00px;font-size:16.00px;line-height:17px;color:#5f5f5f;font-weight:bold;transform:scaleY(0.959);transform-origin:0 14px">Draw Borders</div>
<div class="t" style="left:414.62px;top:227.00px;font-size:17.25px;line-height:20px;color:#6a6a6a">Bottom Border</div><div class="a" style="left:426.12px;top:245.00px;width:9.59px;height:1px;background:#6a6a6a"></div>
<div class="t" style="left:415.66px;top:261.40px;font-size:16.96px;line-height:19px;color:#6a6a6a">Top Border</div><div class="a" style="left:433.57px;top:278.40px;width:9.43px;height:1px;background:#6a6a6a"></div>
<div class="t" style="left:414.66px;top:295.00px;font-size:16.81px;line-height:19px;color:#6a6a6a">Left Border</div><div class="a" style="left:414.66px;top:312.00px;width:9.35px;height:1px;background:#6a6a6a"></div>
<div class="t" style="left:414.66px;top:329.00px;font-size:16.70px;line-height:19px;color:#6a6a6a">Right Border</div><div class="a" style="left:414.66px;top:346.00px;width:12.06px;height:1px;background:#6a6a6a"></div>
<div class="t" style="left:414.64px;top:366.00px;font-size:16.96px;line-height:19px;color:#6a6a6a">No Border</div><div class="a" style="left:414.64px;top:383.00px;width:12.24px;height:1px;background:#6a6a6a"></div>
<div class="t" style="left:416.00px;top:399.20px;font-size:16.54px;line-height:19px;color:#6a6a6a">All Borders</div><div class="a" style="left:416.00px;top:416.20px;width:11.03px;height:1px;background:#6a6a6a"></div>
<div class="t" style="left:415.35px;top:432.40px;font-size:16.36px;line-height:18px;color:#6a6a6a">Outside Borders</div><div class="a" style="left:441.72px;top:449.40px;width:8.18px;height:1px;background:#6a6a6a"></div>
<div class="t" style="left:415.68px;top:466.00px;font-size:16.21px;line-height:18px;color:#444">Thick Outside Borders</div><div class="a" style="left:415.68px;top:483.00px;width:9.90px;height:1px;background:#444"></div>
<div class="t" style="left:414.62px;top:501.50px;font-size:17.19px;line-height:20px;color:#6a6a6a">Bottom Double Border</div><div class="a" style="left:414.62px;top:519.50px;width:11.47px;height:1px;background:#6a6a6a"></div>
<div class="t" style="left:415.67px;top:536.00px;font-size:16.65px;line-height:19px;color:#6a6a6a">Thick Bottom Border</div><div class="a" style="left:425.84px;top:553.00px;width:9.26px;height:1px;background:#6a6a6a"></div>
<div class="t" style="left:415.66px;top:569.40px;font-size:17.07px;line-height:19px;color:#6a6a6a">Top and Bottom Border</div><div class="a" style="left:466.92px;top:586.40px;width:9.49px;height:1px;background:#6a6a6a"></div>
<div class="t" style="left:415.66px;top:602.60px;font-size:16.85px;line-height:19px;color:#6a6a6a">Top and Thick Bottom Border</div><div class="a" style="left:512.11px;top:619.60px;width:8.42px;height:1px;background:#6a6a6a"></div>
<div class="t" style="left:415.66px;top:636.00px;font-size:17.11px;line-height:19px;color:#6a6a6a">Top and Double Bottom Border</div><div class="a" style="left:503.18px;top:653.00px;width:9.52px;height:1px;background:#6a6a6a"></div>
<div class="t" style="left:414.67px;top:703.60px;font-size:16.67px;line-height:19px;color:#6a6a6a">Draw Border</div><div class="a" style="left:441.52px;top:720.60px;width:12.04px;height:1px;background:#6a6a6a"></div>
<div class="t" style="left:414.66px;top:737.00px;font-size:16.71px;line-height:19px;color:#6a6a6a">Draw Border Grid</div><div class="a" style="left:513.08px;top:754.00px;width:13.00px;height:1px;background:#6a6a6a"></div>
<div class="t" style="left:414.73px;top:771.60px;font-size:15.87px;line-height:17px;color:#6a6a6a">Erase Border</div><div class="a" style="left:414.73px;top:787.60px;width:10.58px;height:1px;background:#6a6a6a"></div>
<div class="t" style="left:414.68px;top:804.00px;font-size:16.53px;line-height:19px;color:#6a6a6a">Line Color</div><div class="a" style="left:423.87px;top:821.00px;width:3.67px;height:1px;background:#6a6a6a"></div>
<div class="t" style="left:414.71px;top:837.60px;font-size:16.14px;line-height:18px;color:#6a6a6a">Line Style</div><div class="a" style="left:464.95px;top:854.60px;width:8.07px;height:1px;background:#6a6a6a"></div>
<div class="t" style="left:414.71px;top:874.40px;font-size:16.18px;line-height:18px;color:#6a6a6a">More Borders...</div><div class="a" style="left:414.71px;top:891.40px;width:13.48px;height:1px;background:#6a6a6a"></div>
<div class="a" style="left:416px;top:354px;width:268px;height:1px;background:#dcdcdc"></div>
<div class="a" style="left:416px;top:863px;width:268px;height:1px;background:#dcdcdc"></div>
<svg class="a" style="left:0;top:0" width="1000" height="955"><rect x="377.0" y="225.0" width="19.0" height="19.0" fill="#fff"/><path d="M377.50 225.50L377.50 243.50" stroke="#666666" stroke-width="1" stroke-dasharray="1 1" stroke-dashoffset="0.5"/><path d="M386.50 225.50L386.50 243.50" stroke="#666666" stroke-width="1" stroke-dasharray="1 1" stroke-dashoffset="0.5"/><path d="M395.50 225.50L395.50 243.50" stroke="#666666" stroke-width="1" stroke-dasharray="1 1" stroke-dashoffset="0.5"/><path d="M377.50 234.50L395.50 234.50" stroke="#666666" stroke-width="1" stroke-dasharray="1 1" stroke-dashoffset="0.5"/><path d="M377.50 225.50L395.50 225.50" stroke="#666666" stroke-width="1" stroke-dasharray="1 1" stroke-dashoffset="0.5"/><path d="M377.00 243.50L396.00 243.50" stroke="#6e6e6e" stroke-width="1.3"/><rect x="377.0" y="259.0" width="19.0" height="19.0" fill="#fff"/><path d="M377.50 259.50L377.50 277.50" stroke="#666666" stroke-width="1" stroke-dasharray="1 1" stroke-dashoffset="0.5"/><path d="M386.50 259.50L386.50 277.50" stroke="#666666" stroke-width="1" stroke-dasharray="1 1" stroke-dashoffset="0.5"/><path d="M395.50 259.50L395.50 277.50" stroke="#666666" stroke-width="1" stroke-dasharray="1 1" stroke-dashoffset="0.5"/><path d="M377.50 268.50L395.50 268.50" stroke="#666666" stroke-width="1" stroke-dasharray="1 1" stroke-dashoffset="0.5"/><path d="M377.00 259.50L396.00 259.50" stroke="#6e6e6e" stroke-width="1.2"/><path d="M377.50 277.50L395.50 277.50" stroke="#666666" stroke-width="1" stroke-dasharray="1 1" stroke-dashoffset="0.5"/><rect x="377.0" y="292.0" width="19.0" height="19.0" fill="#fff"/><path d="M377.50 292.20L377.50 310.80" stroke="#7a7a7a" stroke-width="1.4"/><path d="M386.50 292.50L386.50 310.50" stroke="#666666" stroke-width="1" stroke-dasharray="1 1" stroke-dashoffset="0.5"/><path d="M395.50 292.50L395.50 310.50" stroke="#666666" stroke-width="1" stroke-dasharray="1 1" stroke-dashoffset="0.5"/><path d="M377.50 301.50L395.50 301.50" stroke="#666666" stroke-width="1" stroke-dasharray="1 1" stroke-dashoffset="0.5"/><path d="M377.50 292.50L395.50 292.50" stroke="#666666" stroke-width="1" stroke-dasharray="1 1" stroke-dashoffset="0.5"/><path d="M377.50 310.50L395.50 310.50" stroke="#666666" stroke-width="1" stroke-dasharray="1 1" stroke-dashoffset="0.5"/><rect x="377.0" y="326.0" width="19.0" height="19.0" fill="#fff"/><path d="M377.50 326.50L377.50 344.50" stroke="#666666" stroke-width="1" stroke-dasharray="1 1" stroke-dashoffset="0.5"/><path d="M386.50 326.50L386.50 344.50" stroke="#666666" stroke-width="1" stroke-dasharray="1 1" stroke-dashoffset="0.5"/><path d="M395.50 326.20L395.50 344.80" stroke="#7a7a7a" stroke-width="1.4"/><path d="M377.50 335.50L395.50 335.50" stroke="#666666" stroke-width="1" stroke-dasharray="1 1" stroke-dashoffset="0.5"/><path d="M377.50 326.50L395.50 326.50" stroke="#666666" stroke-width="1" stroke-dasharray="1 1" stroke-dashoffset="0.5"/><path d="M377.50 344.50L395.50 344.50" stroke="#666666" stroke-width="1" stroke-dasharray="1 1" stroke-dashoffset="0.5"/><rect x="377.0" y="363.0" width="19.0" height="19.0" fill="#fff"/><path d="M377.50 363.50L377.50 381.50" stroke="#666666" stroke-width="1" stroke-dasharray="1 1" stroke-dashoffset="0.5"/><path d="M386.50 363.50L386.50 381.50" stroke="#666666" stroke-width="1" stroke-dasharray="1 1" stroke-dashoffset="0.5"/><path d="M395.50 363.50L395.50 381.50" stroke="#666666" stroke-width="1" stroke-dasharray="1 1" stroke-dashoffset="0.5"/><path d="M377.50 372.50L395.50 372.50" stroke="#666666" stroke-width="1" stroke-dasharray="1 1" stroke-dashoffset="0.5"/><path d="M377.50 363.50L395.50 363.50" stroke="#666666" stroke-width="1" stroke-dasharray="1 1" stroke-dashoffset="0.5"/><path d="M377.50 381.50L395.50 381.50" stroke="#666666" stroke-width="1" stroke-dasharray="1 1" stroke-dashoffset="0.5"/><rect x="377.0" y="396.0" width="19.0" height="19.0" fill="#fff"/><rect x="377.50" y="396.50" width="18.00" height="18.00" fill="none" stroke="#7a7a7a" stroke-width="1.3"/><path d="M386.50 396.50L386.50 414.50" stroke="#7a7a7a" stroke-width="1.3"/><path d="M377.50 405.50L395.50 405.50" stroke="#7a7a7a" stroke-width="1.3"/><rect x="377.0" y="430.0" width="19.0" height="19.0" fill="#fff"/><rect x="377.50" y="430.50" width="18.00" height="18.00" fill="none" stroke="#7a7a7a" stroke-width="1.4"/><path d="M386.50 432.50L386.50 446.50" stroke="#666666" stroke-width="1" stroke-dasharray="1 1" stroke-dashoffset="0.5"/><path d="M379.50 439.50L393.50 439.50" stroke="#666666" stroke-width="1" stroke-dasharray="1 1" stroke-dashoffset="0.5"/><rect x="377.0" y="463.0" width="19.0" height="19.0" fill="#fff"/><rect x="377.50" y="463.50" width="18.00" height="18.00" fill="none" stroke="#5e5e5e" stroke-width="2.4"/><path d="M386.50 465.50L386.50 479.50" stroke="#666666" stroke-width="1" stroke-dasharray="1 1" stroke-dashoffset="0.5"/><path d="M379.50 472.50L393.50 472.50" stroke="#666666" stroke-width="1" stroke-dasharray="1 1" stroke-dashoffset="0.5"/><rect x="377.0" y="500.0" width="19.0" height="19.0" fill="#fff"/><path d="M377.50 500.50L377.50 515.50" stroke="#666666" stroke-width="1" stroke-dasharray="1 1" stroke-dashoffset="0.5"/><path d="M386.50 500.50L386.50 515.50" stroke="#666666" stroke-width="1" stroke-dasharray="1 1" stroke-dashoffset="0.5"/><path d="M395.50 500.50L395.50 515.50" stroke="#666666" stroke-width="1" stroke-dasharray="1 1" stroke-dashoffset="0.5"/><path d="M377.50 508.50L395.50 508.50" stroke="#666666" stroke-width="1" stroke-dasharray="1 1" stroke-dashoffset="0.5"/><path d="M377.50 500.50L395.50 500.50" stroke="#666666" stroke-width="1" stroke-dasharray="1 1" stroke-dashoffset="0.5"/><path d="M377.00 516.00L396.00 516.00" stroke="#a8a8a8" stroke-width="2"/><path d="M377.00 518.50L396.00 518.50" stroke="#5e5e5e" stroke-width="1"/><rect x="377.0" y="533.0" width="19.0" height="19.0" fill="#fff"/><path d="M377.50 533.50L377.50 551.50" stroke="#666666" stroke-width="1" stroke-dasharray="1 1" stroke-dashoffset="0.5"/><path d="M386.50 533.50L386.50 551.50" stroke="#666666" stroke-width="1" stroke-dasharray="1 1" stroke-dashoffset="0.5"/><path d="M395.50 533.50L395.50 551.50" stroke="#666666" stroke-width="1" stroke-dasharray="1 1" stroke-dashoffset="0.5"/><path d="M377.50 542.50L395.50 542.50" stroke="#666666" stroke-width="1" stroke-dasharray="1 1" stroke-dashoffset="0.5"/><path d="M377.50 533.50L395.50 533.50" stroke="#666666" stroke-width="1" stroke-dasharray="1 1" stroke-dashoffset="0.5"/><path d="M377.00 551.00L396.00 551.00" stroke="#6a6a6a" stroke-width="2"/><rect x="377.0" y="567.0" width="19.0" height="19.0" fill="#fff"/><path d="M377.50 567.50L377.50 585.50" stroke="#666666" stroke-width="1" stroke-dasharray="1 1" stroke-dashoffset="0.5"/><path d="M386.50 567.50L386.50 585.50" stroke="#666666" stroke-width="1" stroke-dasharray="1 1" stroke-dashoffset="0.5"/><path d="M395.50 567.50L395.50 585.50" stroke="#666666" stroke-width="1" stroke-dasharray="1 1" stroke-dashoffset="0.5"/><path d="M377.50 576.50L395.50 576.50" stroke="#666666" stroke-width="1" stroke-dasharray="1 1" stroke-dashoffset="0.5"/><path d="M377.00 568.00L396.00 568.00" stroke="#6a6a6a" stroke-width="2"/><path d="M377.00 585.00L396.00 585.00" stroke="#6a6a6a" stroke-width="2"/><rect x="377.0" y="600.0" width="19.0" height="19.0" fill="#fff"/><path d="M377.50 600.50L377.50 618.50" stroke="#666666" stroke-width="1" stroke-dasharray="1 1" stroke-dashoffset="0.5"/><path d="M386.50 600.50L386.50 618.50" stroke="#666666" stroke-width="1" stroke-dasharray="1 1" stroke-dashoffset="0.5"/><path d="M395.50 600.50L395.50 618.50" stroke="#666666" stroke-width="1" stroke-dasharray="1 1" stroke-dashoffset="0.5"/><path d="M377.50 609.50L395.50 609.50" stroke="#666666" stroke-width="1" stroke-dasharray="1 1" stroke-dashoffset="0.5"/><path d="M377.00 601.00L396.00 601.00" stroke="#aaaaaa" stroke-width="2"/><path d="M377.00 618.00L396.00 618.00" stroke="#6a6a6a" stroke-width="2"/><rect x="377.0" y="633.0" width="19.0" height="19.0" fill="#fff"/><path d="M377.50 633.50L377.50 648.50" stroke="#666666" stroke-width="1" stroke-dasharray="1 1" stroke-dashoffset="0.5"/><path d="M386.50 633.50L386.50 648.50" stroke="#666666" stroke-width="1" stroke-dasharray="1 1" stroke-dashoffset="0.5"/><path d="M395.50 633.50L395.50 648.50" stroke="#666666" stroke-width="1" stroke-dasharray="1 1" stroke-dashoffset="0.5"/><path d="M377.50 641.50L395.50 641.50" stroke="#666666" stroke-width="1" stroke-dasharray="1 1" stroke-dashoffset="0.5"/><path d="M377.00 633.50L396.00 633.50" stroke="#6a6a6a" stroke-width="1"/><path d="M377.00 649.00L396.00 649.00" stroke="#a8a8a8" stroke-width="2"/><path d="M377.00 651.50L396.00 651.50" stroke="#5e5e5e" stroke-width="1"/><rect x="377.0" y="872.0" width="19.0" height="19.0" fill="#fff"/><rect x="377.50" y="872.50" width="18.00" height="18.00" fill="none" stroke="#7a7a7a" stroke-width="1.3"/><path d="M386.50 872.50L386.50 890.50" stroke="#7a7a7a" stroke-width="1.3"/><path d="M377.50 881.50L395.50 881.50" stroke="#7a7a7a" stroke-width="1.3"/><rect x="377.6" y="702.4" width="19" height="18" fill="#fff" stroke="#6e6e6e" stroke-width="1.2"/><rect x="377.6" y="702.4" width="19" height="3.4" fill="#6e6e6e"/><path d="M382.3 705.8V720.4M389.9 705.8V720.4M377.6 710.5H396.6M377.6 714.6H396.6" stroke="#8a8a8a" stroke-width="1"/><path d="M384.3 714.0L397.2 701.2" stroke="#fff" stroke-width="4.6" stroke-linecap="round"/><path d="M385.5 712.8L395.7 702.7" stroke="#4d7fb8" stroke-width="3.4"/><path d="M384.3 714.0L384.5 711.4L386.9 713.8Z" fill="#4d7fb8"/><path d="M395.6 702.8L397.2 701.2" stroke="#55657a" stroke-width="3.4"/><rect x="377.6" y="735.6" width="18" height="18" fill="#fff" stroke="#6e6e6e" stroke-width="1.2"/><path d="M386.6 735.6V753.6M377.6 744.6H395.6" stroke="#6e6e6e" stroke-width="1.2"/><path d="M383.6 756.5L397.4 742.5" stroke="#fff" stroke-width="4.6" stroke-linecap="round"/><path d="M384.8 755.3L395.9 744.0" stroke="#4d7fb8" stroke-width="3.4"/><path d="M383.6 756.5L383.8 753.9L386.2 756.3Z" fill="#4d7fb8"/><path d="M395.8 744.1L397.4 742.5" stroke="#55657a" stroke-width="3.4"/><g transform="translate(0 -2)"><path d="M378.8 783.6L390.6 772.2Q392 770.8 393.4 772.2L396.4 775.2Q397.8 776.6 396.4 778L384.6 789.4Q383.2 790.8 381.8 789.4L378.8 786.4Q377.4 785 378.8 783.6Z" fill="#e07f94"/><path d="M380.8 781.8L386.6 787.6" stroke="#fff" stroke-width="0.9"/></g><path d="M377.6 815V801.4H391" fill="none" stroke="#6e6e6e" stroke-width="1.2"/><path d="M383.2 815.4L397.4 801.2" stroke="#fff" stroke-width="4.6" stroke-linecap="round"/><path d="M384.4 814.2L395.9 802.7" stroke="#4d7fb8" stroke-width="3.4"/><path d="M383.2 815.4L383.4 812.8L385.8 815.2Z" fill="#4d7fb8"/><path d="M395.8 802.8L397.4 801.2" stroke="#55657a" stroke-width="3.4"/><rect x="376.2" y="817" width="22" height="5.2" fill="#000"/><path d="M664 808.6L669.2 812.7L664 816.8Z" fill="#555"/><path d="M664 842L669.2 846.3L664 850.6Z" fill="#555"/></svg>
</body></html>
